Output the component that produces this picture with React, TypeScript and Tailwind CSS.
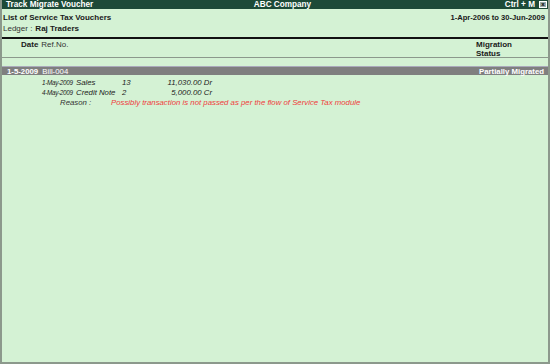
import React from 'react';

const rows = [
  { date: '1-May-2009', type: 'Sales', no: '13', amount: '11,030.00 Dr' },
  { date: '4-May-2009', type: 'Credit Note', no: '2', amount: '5,000.00 Cr' },
];

const App = () => {
  return (
    <div
      className="w-[550px] h-[364px] bg-[#d4f2d4] border-l-2 border-r-2 border-b-2 border-[#8c998c] flex flex-col text-[#1a1a1a]"
      style={{ fontFamily: '"Liberation Sans", Arial, sans-serif' }}
    >
      {/* title bar */}
      <div className="h-[9px] bg-[#1d4a38] text-white font-bold text-[8.2px] leading-[9px] grid grid-cols-3 items-center pl-[4px] pr-[1px]">
        <span>Track Migrate Voucher</span>
        <span className="text-center pl-[12px]">ABC Company</span>
        <span className="flex justify-end items-center gap-[4px]">
          Ctrl + M
          <span className="w-[8px] h-[7px] border border-white bg-[#9aa] text-[6px] leading-[5px] text-center text-black">x</span>
        </span>
      </div>

      {/* report heading */}
      <div className="flex justify-between items-center px-[1px] pt-[3px] text-[8px] font-bold leading-[11px]">
        <span>List of Service Tax Vouchers</span>
        <span className="pr-[2px] text-[7.6px]">1-Apr-2006 to 30-Jun-2009</span>
      </div>
      <div className="flex gap-[3px] px-[1px] text-[8px] leading-[11px]">
        <span className="text-[#333]">Ledger :</span>
        <span className="font-bold">Raj Traders</span>
      </div>

      {/* column heads */}
      <div className="mt-[3px] border-t-2 border-[#111] h-[20px] flex justify-between text-[8px] leading-[9px] pt-[1px]">
        <div className="flex gap-[3px] pl-[19px]">
          <span className="font-bold">Date</span>
          <span className="text-[#333]">Ref.No.</span>
        </div>
        <div className="w-[72px] font-bold">
          <div>Migration</div>
          <div>Status</div>
        </div>
      </div>
      <div className="border-t border-[#8c998c] h-[9px]" />

      {/* voucher bar */}
      <div className="bg-[#7f7f7f] border-t border-[#aab] h-[9px] flex justify-between items-center pl-[5px] pr-[4px] text-white text-[7.8px] leading-[9px] font-bold">
        <div className="flex gap-[4px]">
          <span>1-5-2009</span>
          <span className="font-normal">Bill-004</span>
        </div>
        <span>Partially Migrated</span>
      </div>

      {/* detail rows */}
      <div className="pt-[3px] text-[7.8px] leading-[10px] italic text-[#222]">
        {rows.map((r) => (
          <div key={r.date} className="flex items-baseline">
            <span className="w-[74px] pl-[40px] text-[6.3px] tracking-[-0.3px]">{r.date}</span>
            <span className="w-[46px]">{r.type}</span>
            <span className="w-[38px]">{r.no}</span>
            <span className="w-[52px] text-right">{r.amount}</span>
          </div>
        ))}
        <div className="flex">
          <span className="w-[109px] pl-[58px] text-[#333]">Reason :</span>
          <span className="text-[#f03c3c]">
            Possibly transaction is not passed as per the flow of Service Tax module
          </span>
        </div>
      </div>
    </div>
  );
};

export default App;
